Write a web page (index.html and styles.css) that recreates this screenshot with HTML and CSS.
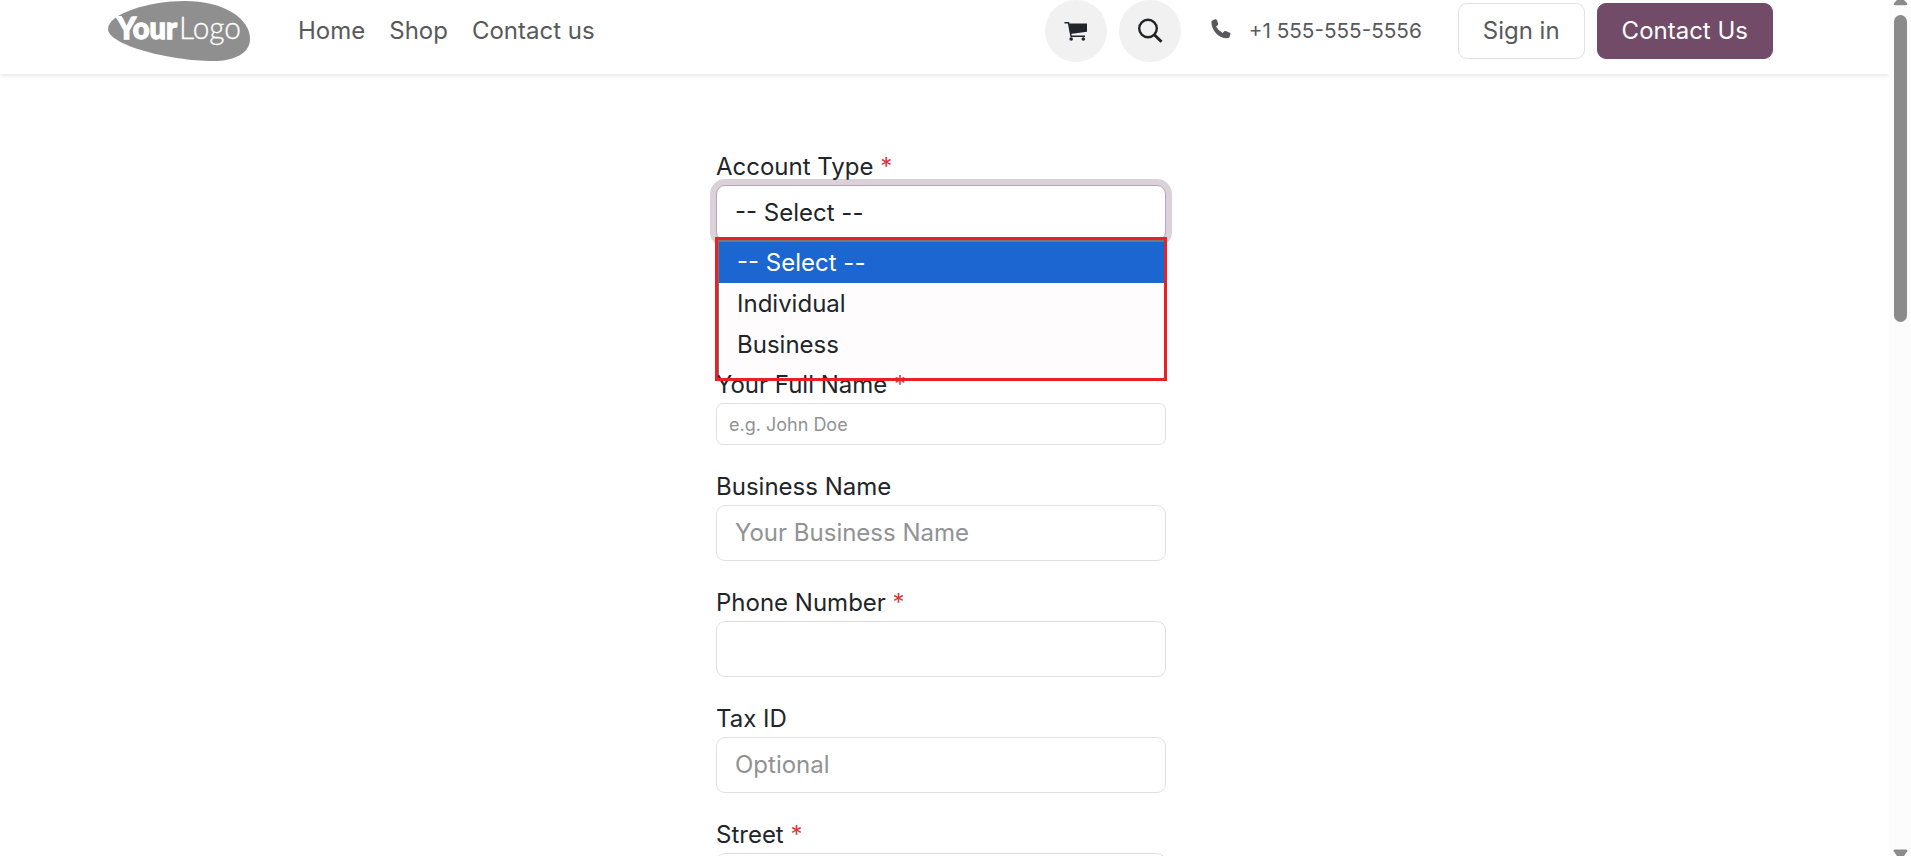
FILE: index.html
```html
<!DOCTYPE html>
<html lang="en">
  <head>
    <meta charset="UTF-8" />
    <meta name="viewport" content="width=device-width, initial-scale=1.0" />
    <title>Sign up</title>
    <link rel="stylesheet" href="styles.css">
  </head>
  <body>
    <div class="page">
      <header class="navbar">
        <a class="logo" href="#">
          <svg width="144" height="62" viewBox="0 0 144 62">
            <path fill="#8f8f8f" d="M0 29C0 14 40 1 77 1c38 0 65 17 65 38 0 14-15 22-37 22C62 61 0 45 0 29z"/>
            <path fill="#fff" d="M6 16h8v4l-2-1-2 1z"/>
            <text class="logo-bold" x="9" y="39" textLength="60" lengthAdjust="spacingAndGlyphs">Your</text>
            <text class="logo-light" x="71" y="39" textLength="62" lengthAdjust="spacingAndGlyphs">Logo</text>
          </svg>
        </a>
        <nav class="menu">
          <a href="#">Home</a>
          <a href="#">Shop</a>
          <a href="#">Contact us</a>
        </nav>
        <div class="tools">
          <a class="round" href="#">
            <svg width="24" height="24" viewBox="0 0 24 24">
              <path fill="#212529" d="M5 4.500h18v8.200L6.200 15z"/>
              <path fill="none" stroke="#212529" stroke-width="1.5" d="M.5 3.700h4L7 17.200M6.500 17.200H21"/>
              <circle cx="7.2" cy="20" r="1.8" fill="#212529"/>
              <circle cx="19.3" cy="20" r="1.8" fill="#212529"/>
            </svg>
          </a>
          <a class="round" href="#">
            <svg width="26" height="26" viewBox="0 0 26 26">
              <circle cx="11" cy="10.5" r="8.8" fill="none" stroke="#212529" stroke-width="2.4"/>
              <path stroke="#212529" stroke-width="3" d="M17 16.500l7.500 7.300"/>
            </svg>
          </a>
          <a class="phone" href="#">
            <svg width="20" height="22" viewBox="0 0 20 22">
              <path fill="#58595b" d="M1.200 1.600L4.200.3q1.200-.2 1.700.8l1.300 3.700q.2.900-.5 1.500L5.100 7.600q2.200 4.200 6.500 6.400l1.600-1.700q.7-.6 1.500-.3l4.100 1.700q.9.400.7 1.400l-1 2.900q-.3.900-1.200 1.100C9 20.200.5 12.300.4 3.200q0-1.100.8-1.600z"/>
            </svg>
            <span>+1 555-555-5556</span>
          </a>
          <a class="btn" href="#">Sign in</a>
          <a class="btn btn-primary" href="#">Contact Us</a>
        </div>
      </header>

      <form class="form">
        <div class="field account">
          <label>Account Type <span class="req">*</span></label>
          <div class="input focused">-- Select --</div>
          <div class="options">
            <div class="option selected">-- Select --</div>
            <div class="option">Individual</div>
            <div class="option">Business</div>
          </div>
          <div class="highlight"></div>
        </div>
        <div class="field">
          <label>Your Full Name <span class="req">*</span></label>
          <input class="input small" type="text" placeholder="e.g. John Doe">
        </div>
        <div class="field">
          <label>Business Name</label>
          <input class="input" type="text" placeholder="Your Business Name">
        </div>
        <div class="field">
          <label>Phone Number <span class="req">*</span></label>
          <input class="input" type="tel">
        </div>
        <div class="field">
          <label>Tax ID</label>
          <input class="input" type="text" placeholder="Optional">
        </div>
        <div class="field">
          <label>Street <span class="req">*</span></label>
          <input class="input" type="text">
        </div>
      </form>
    </div>

    <div class="scrollbar">
      <svg width="15" height="6" viewBox="0 0 15 6"><path fill="#8b8b8b" d="M4 0h7l3.300 3.500q.5 1.800-1.300 1.800H2Q.2 5.300.7 3.500z"/></svg>
      <div class="thumb"></div>
      <svg width="15" height="7" viewBox="0 0 15 7"><path fill="#8b8b8b" d="M2 .5h11q1.800 0 1.300 1.800L11 7H4L.7 2.300Q.2.500 2 .5z"/></svg>
    </div>
  </body>
</html>
```

FILE: styles.css
```css
* {
    box-sizing: border-box;
}

body {
    margin: 0;
    height: 100vh;
    display: flex;
    overflow: hidden;
    background: #fff;
    font-family: Inter, "Liberation Sans", sans-serif;
    font-size: 24px;
    line-height: 36px;
    color: #212529;
}

a {
    color: #58595b;
    text-decoration: none;
}

.page {
    flex: 1;
    height: 100vh;
    overflow: hidden;
}

.navbar {
    display: flex;
    align-items: flex-start;
    height: 74px;
    padding: 0 116px 0 108px;
    box-shadow: 0 2px 4px rgba(0, 0, 0, 0.09);
}

.logo svg {
    display: block;
}

.logo-bold,
.logo-light {
    font-family: Lato, sans-serif;
    font-size: 31px;
    fill: #fff;
}

.logo-bold {
    font-weight: 900;
    stroke: #fff;
    stroke-width: 1.3px;
}

.logo-light {
    font-weight: 300;
    stroke: #fff;
    stroke-width: 0.3px;
}

.menu {
    display: flex;
    gap: 24px;
    margin-left: 46px;
    padding-top: 13px;
}

.tools {
    display: flex;
    align-items: center;
    gap: 12px;
    height: 62px;
    margin-left: auto;
}

.round {
    display: flex;
    align-items: center;
    justify-content: center;
    width: 62px;
    height: 62px;
    border-radius: 50%;
    background: #f1f1f1;
}

.phone {
    display: flex;
    align-items: center;
    gap: 18px;
    margin: 0 24px 0 18px;
    font-size: 20.7px;
}

.phone svg {
    margin-bottom: 2px;
}

.btn {
    height: 56px;
    padding: 9px 24px;
    border: 1px solid #e2e2e2;
    border-radius: 9px;
}

.btn-primary {
    background: #714b67;
    border-color: #714b67;
    color: #fff;
}

.form {
    width: 450px;
    margin: 75px 0 0 716px;
}

.field {
    margin-bottom: 24px;
}

.field label {
    display: block;
}

.req {
    color: #dc3545;
}

.input {
    display: block;
    width: 100%;
    height: 56px;
    padding: 8px 18px 10px;
    border: 1px solid #dee0e2;
    border-radius: 9px;
    background: #fff;
    color: #212529;
    font: inherit;
}

.input::placeholder {
    color: #909294;
    opacity: 1;
}

.input.small {
    height: 42px;
    padding: 6px 12px;
    border-radius: 7px;
    font-size: 18px;
}

.focused {
    padding-top: 9px;
    border-color: #b8a5b3;
    box-shadow: 0 0 0 6px #dbd2d9;
}

.account {
    position: relative;
    height: 194px;
}

.options {
    position: absolute;
    top: 91px;
    left: 2px;
    width: 448px;
    height: 135px;
    border-top: 2px solid #767676;
    border-left: 1px solid #767676;
    background: #fefcfd;
}

.option {
    height: 41px;
    padding: 3px 18px;
}

.selected {
    background: #1c66d1;
    color: #fff;
}

/* red frame around the opened list */
.highlight {
    position: absolute;
    top: 88px;
    left: -1px;
    width: 452px;
    height: 144px;
    border: 3px solid #ea2122;
}

.scrollbar {
    display: flex;
    flex-direction: column;
    align-items: center;
    width: 22px;
    height: 100vh;
    background: #fcfcfc;
}

.scrollbar svg:last-child {
    margin-top: auto;
}

.thumb {
    width: 13px;
    height: 307px;
    margin-top: 9px;
    border-radius: 7px;
    background: #8b8b8b;
}
```
